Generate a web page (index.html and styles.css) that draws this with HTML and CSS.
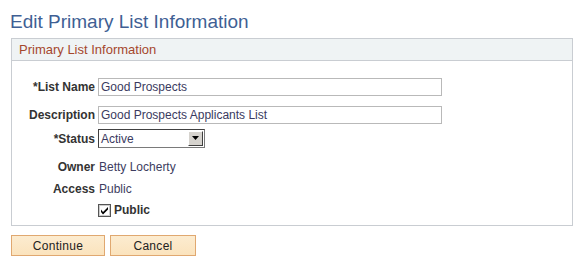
FILE: index.html
```html
<!DOCTYPE html>
<html lang="en">
<head>
    <meta charset="UTF-8">
    <title>Edit Primary List Information</title>
    <link rel="stylesheet" href="styles.css">
</head>
<body>
    <div class="page">
        <h1 class="page-title">Edit Primary List Information</h1>

        <div class="group-box">
            <div class="group-header">Primary List Information</div>
            <div class="group-body">
                <div class="row row-name">
                    <label class="field-label">*List Name</label>
                    <input class="text-input" type="text" value="Good Prospects">
                </div>
                <div class="row row-desc">
                    <label class="field-label">Description</label>
                    <input class="text-input" type="text" value="Good Prospects Applicants List">
                </div>
                <div class="row row-status">
                    <label class="field-label">*Status</label>
                    <div class="select-box">
                        <span class="select-value">Active</span>
                        <span class="select-arrow">
                            <svg width="8" height="5" viewBox="0 0 8 5"><path d="M0 0h7L3.5 4z" fill="#000"/></svg>
                        </span>
                    </div>
                </div>
                <div class="row row-text">
                    <span class="field-label">Owner</span>
                    <span class="field-value">Betty Locherty</span>
                </div>
                <div class="row row-text">
                    <span class="field-label">Access</span>
                    <span class="field-value">Public</span>
                </div>
                <div class="row row-check">
                    <span class="field-label"></span>
                    <span class="check-box">
                        <svg width="13" height="13" viewBox="0 0 13 13">
                            <rect x="0.5" y="0.5" width="12" height="12" fill="#fff" stroke="#555"/>
                            <rect x="1.5" y="1.5" width="10" height="10" fill="none" stroke="#ccc"/>
                            <path d="M3 5.5l2 2.5L10 3v2.5L5 10.5 3 8z" fill="#000"/>
                        </svg>
                    </span>
                    <span class="check-label">Public</span>
                </div>
            </div>
        </div>

        <div class="buttons">
            <button class="btn btn-continue">Continue</button>
            <button class="btn btn-cancel">Cancel</button>
        </div>
    </div>
</body>
</html>
```

FILE: styles.css
```css
body {
    margin: 0;
    font-family: "Liberation Sans", Arial, sans-serif;
    background: #fff;
}
.page {
    padding: 10px 10px 0 11px;
}
.page-title {
    margin: 0 0 0 -1px;
    font-size: 19px;
    font-weight: normal;
    line-height: 24px;
    color: #3f5f94;
}
.group-box {
    margin-top: 4px;
    width: 560px;
    border: 1px solid #c9cdd2;
}
.group-header {
    height: 21px;
    line-height: 21px;
    padding-left: 7px;
    background: #eff3f4;
    border-bottom: 1px solid #c9cdd2;
    font-size: 13px;
    color: #a5472c;
}
.group-body {
    padding: 17px 0 8px 0;
}
.row {
    display: flex;
    align-items: center;
}
.field-label {
    width: 83px;
    margin-right: 3px;
    text-align: right;
    font-size: 12px;
    font-weight: bold;
    color: #333;
    flex-shrink: 0;
}
.text-input {
    box-sizing: border-box;
    width: 344px;
    height: 18px;
    margin: 0;
    padding: 0 2px;
    border: 1px solid #b9b9b9;
    font-family: "Liberation Sans", Arial, sans-serif;
    font-size: 12px;
    color: #3a3a60;
    outline: none;
}
.row-name {
    height: 18px;
}
.row-desc {
    height: 18px;
    margin-top: 10px;
}
.row-status {
    height: 19px;
    margin-top: 5px;
}
.select-box {
    box-sizing: border-box;
    display: flex;
    align-items: center;
    width: 107px;
    height: 19px;
    border: 1px solid #7a7a7a;
    border-top-color: #404040;
    border-left-color: #404040;
    background: #fff;
}
.select-value {
    flex: 1;
    padding-left: 2px;
    font-size: 12px;
    color: #3a3a60;
}
.select-arrow {
    box-sizing: border-box;
    display: flex;
    align-items: center;
    justify-content: center;
    width: 15px;
    height: 15px;
    margin-right: 1px;
    background: #d6d3ce;
    border: 1px solid #fff;
    border-right-color: #404040;
    border-bottom-color: #404040;
}
.row-text {
    height: 20px;
    margin-top: 9px;
}
.row-text + .row-text {
    margin-top: 2px;
}
.field-value {
    font-size: 12px;
    color: #3d3d5f;
    padding-left: 1px;
}
.row-check {
    height: 14px;
    margin-top: 4px;
}
.check-box {
    display: flex;
    width: 13px;
    height: 13px;
}
.check-label {
    margin-left: 3px;
    font-size: 12px;
    font-weight: bold;
    color: #333;
}
.buttons {
    display: flex;
    gap: 5px;
    margin-top: 9px;
}
.btn {
    box-sizing: border-box;
    height: 21px;
    padding: 0;
    border: 1px solid #e0a870;
    background: linear-gradient(#fcecd0, #fbe3bd);
    font-family: "Liberation Sans", Arial, sans-serif;
    font-size: 12px;
    color: #222;
    letter-spacing: 0.3px;
}
.btn-continue {
    width: 94px;
}
.btn-cancel {
    width: 86px;
}
```
